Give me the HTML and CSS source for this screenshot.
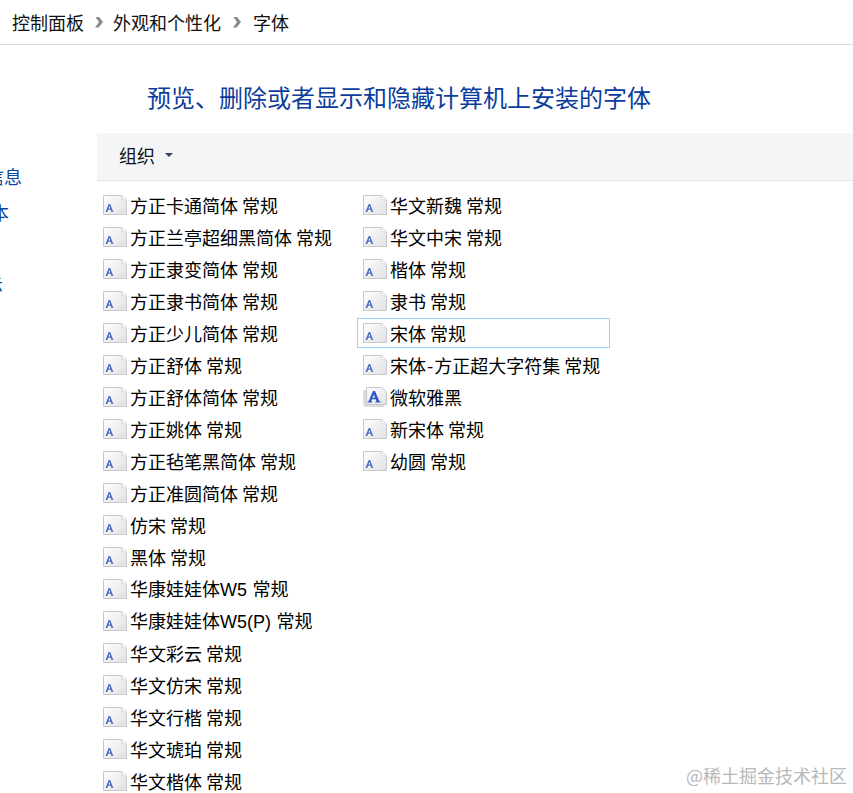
FILE: index.html
```html
<!DOCTYPE html>
<html lang="zh">
<head>
<meta charset="utf-8">
<title>字体</title>
<link rel="stylesheet" href="styles.css">
</head>
<body>
<svg class="defs" width="0" height="0" aria-hidden="true">
  <defs>
    <linearGradient id="paper" x1="0" y1="0" x2="1" y2="1">
      <stop offset="0" stop-color="#ffffff"/>
      <stop offset="1" stop-color="#e0e0e4"/>
    </linearGradient>
    <symbol id="font" viewBox="0 0 24 20">
      <path d="M.5.5H19L23.500 5V19.500H.5Z" fill="url(#paper)" stroke="#c6c8ce"/>
      <path d="M19 .5V5H23.500" fill="#f6f6f8" stroke="#d8d8dc"/>
      <path d="M2.500 17l3.200-8h1.400l3.200 8H8.500l-.8-2.200H5.100L4.300 17ZM5.500 13.500h1.800L6.400 11Z" fill="#4a6cc8" fill-rule="evenodd"/>
    </symbol>
    <symbol id="family" viewBox="0 0 24 20">
      <path d="M0 3H3V17H21V20H2L0 18Z" fill="#dcdcdc"/>
      <path d="M3.500 .5H19L23.500 5V17.500H3.500Z" fill="url(#paper)" stroke="#c6c8ce"/>
      <path d="M4.500 15.500v-1h1L10 4h2l4.500 10.500h1v1h-5v-1h1l-.8-2.200H9l-.8 2.200h1v1ZM9.600 10.800h2.500L10.900 7.500Z" fill="#2f58c4" fill-rule="evenodd"/>
    </symbol>
  </defs>
</svg>
<header class="crumbs">
  <span>控制面板</span><i class="sep"></i><span>外观和个性化</span><i class="sep sep-wide"></i><span>字体</span>
</header>
<div class="body">
  <nav class="side">
    <a class="l1">信息</a>
    <a class="l2">本</a>
    <a class="l3">示</a>
  </nav>
  <main class="main">
    <h1 class="title">预览、删除或者显示和隐藏计算机上安装的字体</h1>
    <div class="toolbar"><span>组织</span><i class="caret"></i></div>
    <ul class="grid">
      <li class="item"><svg class="ico"><use href="#font"/></svg>方正卡通简体 常规</li>
      <li class="item"><svg class="ico"><use href="#font"/></svg>方正兰亭超细黑简体 常规</li>
      <li class="item"><svg class="ico"><use href="#font"/></svg>方正隶变简体 常规</li>
      <li class="item"><svg class="ico"><use href="#font"/></svg>方正隶书简体 常规</li>
      <li class="item"><svg class="ico"><use href="#font"/></svg>方正少儿简体 常规</li>
      <li class="item"><svg class="ico"><use href="#font"/></svg>方正舒体 常规</li>
      <li class="item"><svg class="ico"><use href="#font"/></svg>方正舒体简体 常规</li>
      <li class="item"><svg class="ico"><use href="#font"/></svg>方正姚体 常规</li>
      <li class="item"><svg class="ico"><use href="#font"/></svg>方正毡笔黑简体 常规</li>
      <li class="item"><svg class="ico"><use href="#font"/></svg>方正准圆简体 常规</li>
      <li class="item"><svg class="ico"><use href="#font"/></svg>仿宋 常规</li>
      <li class="item"><svg class="ico"><use href="#font"/></svg>黑体 常规</li>
      <li class="item"><svg class="ico"><use href="#font"/></svg><span>华康娃娃体<span class="latin">W5</span> 常规</span></li>
      <li class="item"><svg class="ico"><use href="#font"/></svg><span>华康娃娃体<span class="latin">W5(P)</span> 常规</span></li>
      <li class="item"><svg class="ico"><use href="#font"/></svg>华文彩云 常规</li>
      <li class="item"><svg class="ico"><use href="#font"/></svg>华文仿宋 常规</li>
      <li class="item"><svg class="ico"><use href="#font"/></svg>华文行楷 常规</li>
      <li class="item"><svg class="ico"><use href="#font"/></svg>华文琥珀 常规</li>
      <li class="item"><svg class="ico"><use href="#font"/></svg>华文楷体 常规</li>
      <li class="item"><svg class="ico"><use href="#font"/></svg>华文新魏 常规</li>
      <li class="item"><svg class="ico"><use href="#font"/></svg>华文中宋 常规</li>
      <li class="item"><svg class="ico"><use href="#font"/></svg>楷体 常规</li>
      <li class="item"><svg class="ico"><use href="#font"/></svg>隶书 常规</li>
      <li class="item selected"><svg class="ico"><use href="#font"/></svg>宋体 常规</li>
      <li class="item"><svg class="ico"><use href="#font"/></svg><span>宋体<span class="dash">-</span>方正超大字符集 常规</span></li>
      <li class="item"><svg class="ico"><use href="#family"/></svg>微软雅黑</li>
      <li class="item"><svg class="ico"><use href="#font"/></svg>新宋体 常规</li>
      <li class="item"><svg class="ico"><use href="#font"/></svg>幼圆 常规</li>
    </ul>
  </main>
</div>
<div class="mark">@稀土掘金技术社区</div>
</body>
</html>
```
FILE: styles.css
```css
* { box-sizing: border-box; }
html, body { margin: 0; height: 793px; overflow: hidden; background: #fff; }
body {
  position: relative;
  font-family: "Noto Sans CJK SC", "Liberation Sans", sans-serif;
  color: #111;
  font-size: 18px;
}
.defs { position: absolute; }
.crumbs {
  height: 45px;
  border-bottom: 1px solid #dcdcdc;
  padding: 0 0 0 12px;
  display: flex;
  align-items: center;
  font-size: 18px;
  line-height: 44px;
}
.sep {
  width: 8px;
  height: 11px;
  margin: 0 10px 0 11px;
  background: #8a8a8a;
  clip-path: polygon(0 0, 45% 0, 100% 50%, 45% 100%, 0 100%, 50% 50%);
}
.sep-wide { margin: 0 12px 0 12px; }
.body { display: flex; }
.side { width: 97px; flex: none; position: relative; overflow: hidden; }
.side a { position: absolute; font-size: 18px; line-height: 24px; color: #0a469e; white-space: nowrap; }
.l1 { left: -14px; top: 119px; }
.l2 { left: -9px; top: 155px; }
.l3 { left: -15px; top: 227px; }
.main { flex: 1; min-width: 0; }
.title {
  margin: 0;
  height: 88px;
  padding: 35px 0 0 50px;
  font-size: 24px;
  line-height: 34px;
  font-weight: 400;
  color: #0b3d9c;
  white-space: nowrap;
}
.toolbar {
  height: 48px;
  background: #f4f5f7;
  border-bottom: 1px solid #e3e3e3;
  display: flex;
  align-items: center;
  padding: 0 0 3px 22px;
  font-size: 18px;
}
.caret {
  margin-left: 10px;
  width: 0;
  height: 0;
  border: 4px solid transparent;
  border-top: 4px solid #33415c;
  border-bottom: 0;
}
.grid {
  list-style: none;
  margin: 9px 0 0;
  padding: 0 0 0 6px;
  height: 608px;
  display: grid;
  grid-template-rows: repeat(19, 32px);
  grid-auto-flow: column;
  grid-auto-columns: 254px;
  column-gap: 6px;
}
.item {
  display: flex;
  align-items: center;
  gap: 3px;
  height: 30px;
  font-size: 18px;
  line-height: 30px;
  white-space: nowrap;
  color: #000;
  border: 1px solid transparent;
  margin: 0 7px 2px -6px;
  padding-left: 5px;
}
.latin { font-family: "Liberation Sans", sans-serif; margin-right: 1.5px; }
.dash { margin: 0 1px; }
.selected { border-color: #99d1ff; }
.ico { width: 24px; height: 20px; flex: none; }
.mark {
  position: absolute;
  right: 6px;
  bottom: 5px;
  font-size: 18px;
  line-height: 26px;
  color: #b8b8b8;
}
```
